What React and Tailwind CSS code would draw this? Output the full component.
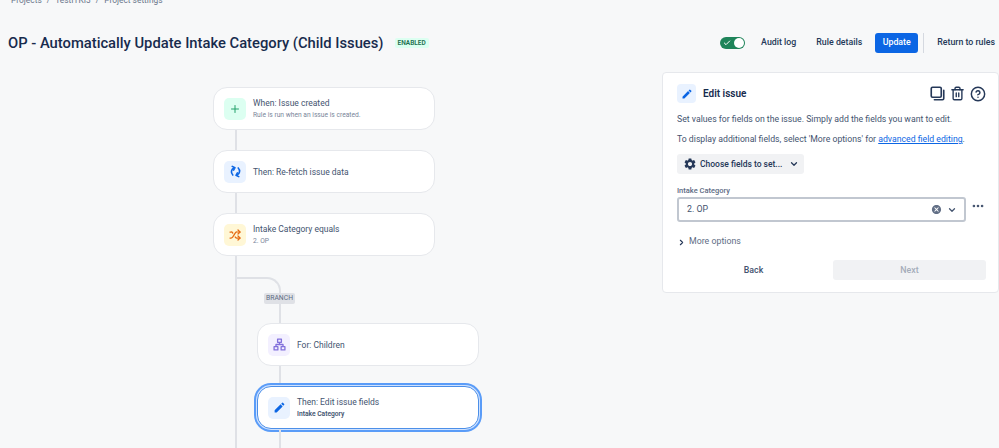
import { Check, ChevronDown, ChevronRight, CircleHelp, Ellipsis, Plus, Shuffle, Trash2 } from 'lucide-react'
import { MdCancel, MdEdit, MdSettings } from 'react-icons/md'

function RuleCard({ icon, tint, title, sub, subBold, selected }) {
  return (
    <div className={`w-[222px] h-[43px] rounded-[14px] bg-white border flex items-center pl-[10px] gap-[7px] shrink-0 ${selected ? 'border-[#4c8fe8] shadow-[0_0_0_1px_#cfe2ff,0_0_0_3px_#5a9cf8]' : 'border-[#e6e8ec]'}`}>
      <div className={`w-[22px] h-[22px] rounded-[5px] flex items-center justify-center ${tint}`}>{icon}</div>
      <div className="pt-[1px] flex flex-col gap-[2px] leading-none">
        <div className="text-[8.5px] leading-[11px] text-[#44546f]">{title}</div>
        {sub && (
          <div className={`text-[6.7px] leading-[9px] ${subBold ? 'font-semibold text-[#44546f]' : 'text-[#7a869a]'}`}>{sub}</div>
        )}
      </div>
    </div>
  )
}

function Connector() {
  return <div className="ml-[22px] w-[2px] h-[20px] bg-[#dfe1e6] shrink-0" />
}

function CopyIcon() {
  return (
    <svg width="15" height="15" viewBox="0 0 24 24" fill="none" stroke="currentColor" strokeWidth="2.6" strokeLinejoin="round" strokeLinecap="round">
      <rect x="2" y="2" width="16" height="16" rx="2" />
      <path d="M7 22h13a2 2 0 0 0 2-2V7" />
    </svg>
  )
}

function SyncIcon() {
  return (
    <svg width="13" height="13" viewBox="0 0 24 24" fill="none" stroke="#0c66e4" strokeWidth="3" strokeLinejoin="round" strokeLinecap="round">
      <path d="M9 5.5A8 8 0 0 0 7 18.5" />
      <path d="M6 2.5l5 2.5-2.5 4.5" />
      <path d="M15 18.5A8 8 0 0 0 17 5.5" />
      <path d="M18 21.5l-5-2.5 2.5-4.5" />
    </svg>
  )
}

function TreeIcon() {
  return (
    <svg width="13" height="13" viewBox="0 0 24 24" fill="none" stroke="#8270db" strokeWidth="2.4" strokeLinejoin="round">
      <rect x="8.5" y="2" width="7" height="6" />
      <rect x="2" y="16" width="7" height="6" />
      <rect x="15" y="16" width="7" height="6" />
      <path d="M12 8v4M5.5 16v-4h13v4" />
    </svg>
  )
}

export default function App() {
  return (
    <div className="w-[999px] h-[448px] overflow-hidden bg-[#f7f8f9] font-['Roboto',sans-serif] flex flex-col">
      {/* Breadcrumbs */}
      <div className="h-[7px] pl-[11px] flex items-end gap-[5px] text-[8.4px] leading-[14px] text-[#6b778c] shrink-0">
        <span>Projects</span>
        <span>/</span>
        <span>TestITKI3</span>
        <span>/</span>
        <span>Project settings</span>
      </div>

      {/* Title bar */}
      <div className="h-[65px] pt-[7px] pr-[4px] pl-[8px] flex items-center shrink-0">
        <h1 className="text-[14.75px] font-medium text-[#172b4d] whitespace-nowrap">OP - Automatically Update Intake Category (Child Issues)</h1>
        <span className="ml-[11px] px-[3px] h-[10px] rounded-[2px] bg-[#dcfff1] text-[#216e4e] text-[6.5px] font-semibold leading-[10px]">ENABLED</span>

        <div className="ml-auto flex items-center">
          <div className="w-[25px] h-[12px] rounded-full bg-[#1f845a] flex items-center justify-between pl-[3px] pr-[1px]">
            <Check size={8} strokeWidth={3} className="text-white" />
            <div className="w-[10px] h-[10px] rounded-full bg-white" />
          </div>
          <span className="ml-[16px] text-[8.8px] font-medium text-[#253858]">Audit log</span>
          <span className="ml-[20px] text-[8.8px] font-medium text-[#253858]">Rule details</span>
          <button className="ml-[13px] w-[43px] h-[20px] rounded-[3px] bg-[#0c66e4] text-white text-[8.8px] font-medium">Update</button>
          <div className="ml-[5px] w-px h-[20px] bg-[#d5d9e0]" />
          <span className="ml-[13px] text-[8.8px] font-medium text-[#253858]">Return to rules</span>
        </div>
      </div>

      {/* Body */}
      <div className="flex flex-1 min-h-0">
        {/* Rule chain */}
        <div className="w-[662px] pl-[213px] pt-[15px] flex flex-col shrink-0">
          <RuleCard
            icon={<Plus size={12} strokeWidth={2} className="text-[#22a06b]" />}
            tint="bg-[#dcfff1]"
            title="When: Issue created"
            sub="Rule is run when an issue is created."
          />
          <Connector />
          <RuleCard
            icon={<SyncIcon />}
            tint="bg-[#e9f2ff]"
            title="Then: Re-fetch issue data"
          />
          <Connector />
          <RuleCard
            icon={<Shuffle size={12} strokeWidth={2.5} className="text-[#e56910]" />}
            tint="bg-[#fff7d6]"
            title="Intake Category equals"
            sub="2. OP"
          />

          {/* Branch */}
          <div className="ml-[22px] flex-1 border-l-2 border-[#dfe1e6] flex flex-col">
            <div className="relative mt-[21px] w-[44px] h-[46px] border-t-2 border-r-2 border-[#dfe1e6] rounded-tr-[14px] shrink-0">
              <span className="absolute left-[27px] top-[14px] h-[11px] px-[2px] rounded-[2px] bg-[#dfe1e6] text-[#5e6c84] text-[6.8px] leading-[11px]">BRANCH</span>
            </div>
            <div className="ml-[20px]">
              <RuleCard
                icon={<TreeIcon />}
                tint="bg-[#f3f0ff]"
                title="For: Children"
              />
              <Connector />
              <RuleCard
                icon={<MdEdit size={13} className="text-[#0c66e4]" />}
                tint="bg-[#e9f2ff]"
                title="Then: Edit issue fields"
                sub="Intake Category"
                subBold
                selected
              />
              <Connector />
            </div>
          </div>
        </div>

        {/* Edit panel */}
        <div className="w-[337px] h-[221px] bg-white border border-[#e6e8ec] rounded-[4px] pl-[14px] pr-[12px] pt-[11px] shrink-0">
          <div className="flex items-center h-[19px]">
            <div className="w-[19px] h-[19px] rounded-[4px] bg-[#e9f2ff] flex items-center justify-center">
              <MdEdit size={12} className="text-[#0c66e4]" />
            </div>
            <span className="ml-[7px] text-[10px] font-semibold text-[#172b4d]">Edit issue</span>
            <div className="ml-auto flex items-center gap-[5px] text-[#253858]">
              <CopyIcon />
              <Trash2 size={15} strokeWidth={2.2} />
              <CircleHelp size={16} strokeWidth={2.2} />
            </div>
          </div>
          <p className="mt-[10px] text-[8.7px] leading-[12px] text-[#44546f] whitespace-nowrap">Set values for fields on the issue. Simply add the fields you want to edit.</p>
          <p className="mt-[8px] text-[8.7px] leading-[12px] text-[#44546f] whitespace-nowrap">
            To display additional fields, select 'More options' for <span className="text-[#0c66e4] underline">advanced field editing</span>.
          </p>
          <button className="mt-[9px] w-[127px] h-[20px] rounded-[3px] bg-[#f1f2f4] flex items-center pl-[6px] text-[8.5px] font-medium text-[#253858] whitespace-nowrap">
            <MdSettings size={14} />
            <span className="ml-[3px]">Choose fields to set...</span>
            <ChevronDown size={10} strokeWidth={3} className="ml-[7px]" />
          </button>
          <div className="mt-[12px] text-[7.5px] leading-[10px] font-medium text-[#5e6c84]">Intake Category</div>
          <div className="mt-[1px] flex items-start">
            <div className="w-[289px] h-[25px] rounded-[3px] border-2 border-[#c1c7d0] bg-white flex items-center pl-[8px] pr-[7px] text-[8.8px] text-[#44546f]">
              <span>2. OP</span>
              <MdCancel size={11} className="ml-auto text-[#626f86]" />
              <ChevronDown size={10} strokeWidth={3} className="ml-[5px] text-[#44546f]" />
            </div>
            <Ellipsis size={14} strokeWidth={2.5} className="ml-[5px] mt-[2px] text-[#44546f]" />
          </div>
          <div className="mt-[14px] h-[12px] flex items-center text-[8.8px] text-[#5e6c84]">
            <ChevronRight size={9} strokeWidth={3} className="text-[#253858]" />
            <span className="ml-[3px]">More options</span>
          </div>
          <div className="mt-[12px] flex items-center">
            <button className="w-[154px] h-[20px] pt-[1px] text-[8.8px] font-medium text-[#42526e]">Back</button>
            <button className="ml-[3px] w-[154px] h-[20px] pt-[1px] rounded-[3px] bg-[#f1f2f4] text-[8.8px] font-medium text-[#a5adba]">Next</button>
          </div>
        </div>
      </div>
    </div>
  )
}
